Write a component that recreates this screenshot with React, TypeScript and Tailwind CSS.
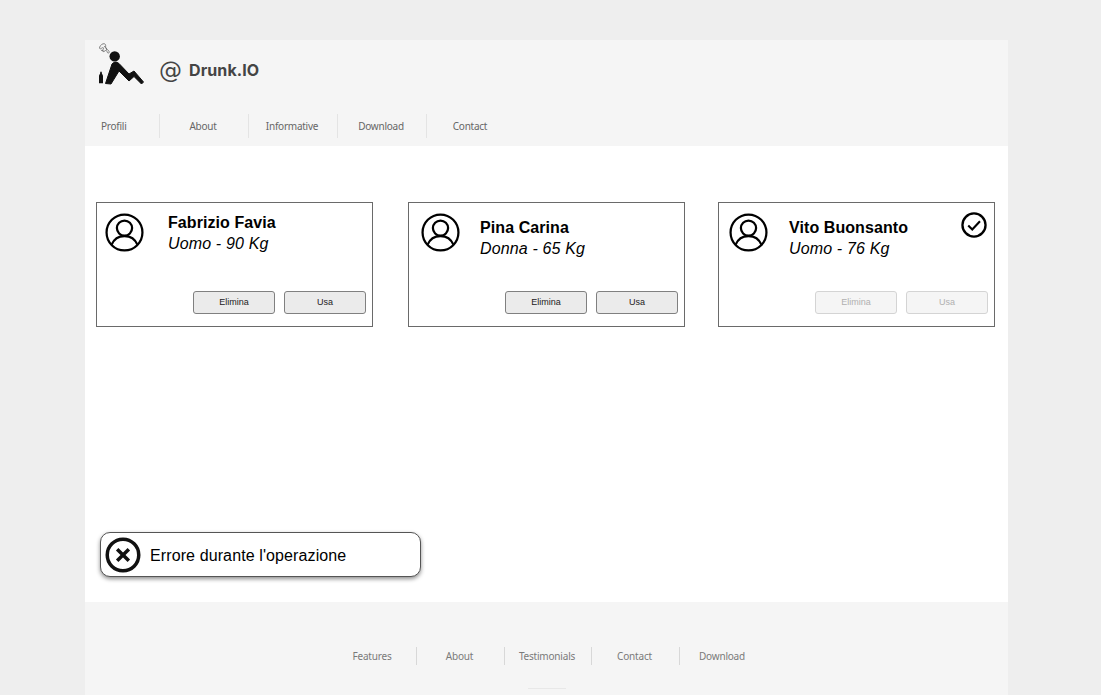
const sans = "font-['Liberation_Sans',Arial,sans-serif]";

function Avatar() {
  return (
    <svg width="39" height="39" viewBox="0 0 40 40" fill="none" stroke="#000" strokeWidth="2.3" className="shrink-0">
      <circle cx="20" cy="20" r="18.4" />
      <circle cx="20" cy="15.5" r="7.8" />
      <path d="M6.8 32.5c2.2-5.6 7-8.9 13.2-8.9s11 3.3 13.2 8.9" />
    </svg>
  );
}

function Btn({ label, disabled }: { label: string; disabled?: boolean }) {
  return (
    <div
      className={
        disabled
          ? "w-[82px] h-[23px] rounded-[3px] border border-[#d4d4d4] bg-[#f5f5f5] text-[#b0b0b0] text-[9px] flex items-center justify-center"
          : "w-[82px] h-[23px] rounded-[3px] border border-[#808080] bg-[#ebebeb] text-[#222] text-[9px] flex items-center justify-center"
      }
    >
      {label}
    </div>
  );
}

function Card({
  name,
  info,
  nameTop,
  check,
  disabled,
  left,
  textLeft,
}: {
  name: string;
  info: string;
  nameTop: string;
  check?: boolean;
  disabled?: boolean;
  left: string;
  textLeft: string;
}) {
  return (
    <div className={`w-[277px] h-[125px] border border-[#6a6a6a] bg-white flex flex-col relative shrink-0 ${left}`}>
      <div className="flex items-start pt-[10px] flex-1">
        <div className={textLeft}>
          <Avatar />
        </div>
        <div className={`${nameTop} text-black`}>
          <div className="text-[16px] leading-[20px] font-bold tracking-[0.08px]">{name}</div>
          <div className="text-[16px] leading-[22px] italic tracking-[0.15px]">{info}</div>
        </div>
      </div>
      <div className="flex gap-[9px] pb-[12px] pl-[96px]">
        <Btn label="Elimina" disabled={disabled} />
        <Btn label="Usa" disabled={disabled} />
      </div>
      {check && (
        <svg width="26" height="26" viewBox="0 0 27 27" fill="none" stroke="#000" className="absolute right-[7px] top-[9px]">
          <circle cx="13.5" cy="13.5" r="12" strokeWidth="2.4" />
          <path d="M7.5 14l4.2 4.2 8-8.6" strokeWidth="2.2" />
        </svg>
      )}
    </div>
  );
}

function Logo() {
  return (
    <svg width="48" height="43" viewBox="0 0 48 43" className="shrink-0" fill="none">
      <g stroke="#666" strokeWidth="0.8">
        <path d="M5 .8C3 1.6 1.2 3.6 1.6 5.4c.5 1.6 3-1.6 3.8-.6s-1.6 2.6-.6 3.6 2.6-1.6 3.6-.8.4 2.4 2 2.4.8-2.4-.8-3.2S7.4 4.6 7.6 3.4 7.6.2 5 .8z" />
        <path d="M6 3.4c2 .6 3 2 2.6 3.6M3 7.4c1.400-.2 2.400 0 3 1" />
      </g>
      <circle cx="16.7" cy="13.4" r="5.200" fill="#111" />
      <path
        d="M7.500 40.500L14 21Q17 17.500 21 20.500L31 31 36 28 45.500 39 43.500 41 36 33.500 31 38 21 28 13 41z"
        fill="#111"
        stroke="#111"
        strokeWidth="1"
        strokeLinejoin="round"
      />
      <path d="M1 40.300V33c0-1.200 1-1.600 1.200-3V28.800h1.600V30c.2 1.400 1.200 1.800 1.200 3v7.300z" fill="#111" />
    </svg>
  );
}

const header = ["About", "Informative", "Download", "Contact"];
const footer = ["Features", "About", "Testimonials", "Contact", "Download"];

export default function App() {
  return (
    <div className={`w-[1101px] h-[695px] overflow-hidden bg-[#eeeeee] pt-[40px] ${sans}`}>
      <div className="w-[923px] h-[655px] ml-[85px] flex flex-col">
        <header className="h-[106px] bg-[#f5f5f5] flex flex-col">
          <div className="flex items-center h-[60px] pl-[13px]">
            <div className="self-start mt-[3px]">
              <Logo />
            </div>
            <span className="ml-[13px] text-[23px] leading-none text-[#444] font-['DejaVu_Sans',sans-serif]">@</span>
            <span className="ml-[7px] text-[16px] font-bold tracking-[0.1px] text-[#444] font-['Inter',sans-serif]">Drunk.IO</span>
          </div>
          <nav className="flex h-[24px] mt-[14px] text-[10px] tracking-[-0.25px] text-[#666] font-['Noto_Sans',sans-serif]">
            <div className="w-[75px] pl-[16px] flex items-center border-r border-[#e4e4e4]">Profili</div>
            {header.map((h, i) => (
              <div
                key={h}
                className={i < 3 ? "w-[89px] pr-[2px] flex items-center justify-center border-r border-[#e4e4e4]" : "w-[89px] pr-[3px] flex items-center justify-center"}
              >
                {h}
              </div>
            ))}
          </nav>
        </header>

        <main className="h-[456px] bg-white pt-[56px] flex flex-col">
          <div className="flex pl-[11px]">
            <Card name="Fabrizio Favia" info="Uomo - 90 Kg" nameTop="pt-0" left="" textLeft="ml-[8px] mr-[24px]" />
            <Card name="Pina Carina" info="Donna - 65 Kg" nameTop="pt-[5px]" left="ml-[35px]" textLeft="ml-[12px] mr-[20px]" />
            <Card name="Vito Buonsanto" info="Uomo - 76 Kg" nameTop="pt-[5px]" check disabled left="ml-[33px]" textLeft="ml-[10px] mr-[21px]" />
          </div>
          <div className="ml-[15px] mt-[205px] w-[321px] h-[45px] rounded-[10px] border border-[#555] bg-white shadow-[0_2px_4px_rgba(0,0,0,0.45)] flex items-center pl-[4px]">
            <svg width="36" height="36" viewBox="0 0 37 37" fill="none" stroke="#111" className="shrink-0">
              <circle cx="18.5" cy="18.5" r="16.2" strokeWidth="3.6" />
              <path d="M12.5 12.5l12 12M24.5 12.5l-12 12" strokeWidth="3.6" />
            </svg>
            <span className="ml-[9px] mt-[2px] text-[16px] tracking-[0.11px] text-black">Errore durante l'operazione</span>
          </div>
        </main>

        <footer className="h-[93px] bg-[#f5f5f5] pt-[45px] flex flex-col items-center">
          <nav className="flex h-[18px] ml-[4px] text-[10px] tracking-[-0.2px] text-[#7a7a7a] font-['Noto_Sans',sans-serif]">
            {footer.map((f, i) => (
              <div
                key={f}
                className={i < 4 ? "w-[87.5px] pr-[2px] flex items-center justify-center border-r border-[#d8d8d8]" : "w-[87.5px] pr-[3px] flex items-center justify-center"}
              >
                {f}
              </div>
            ))}
          </nav>
          <div className="w-[38px] h-px bg-[#e8e8e8] mt-[23px]" />
        </footer>
      </div>
    </div>
  );
}
